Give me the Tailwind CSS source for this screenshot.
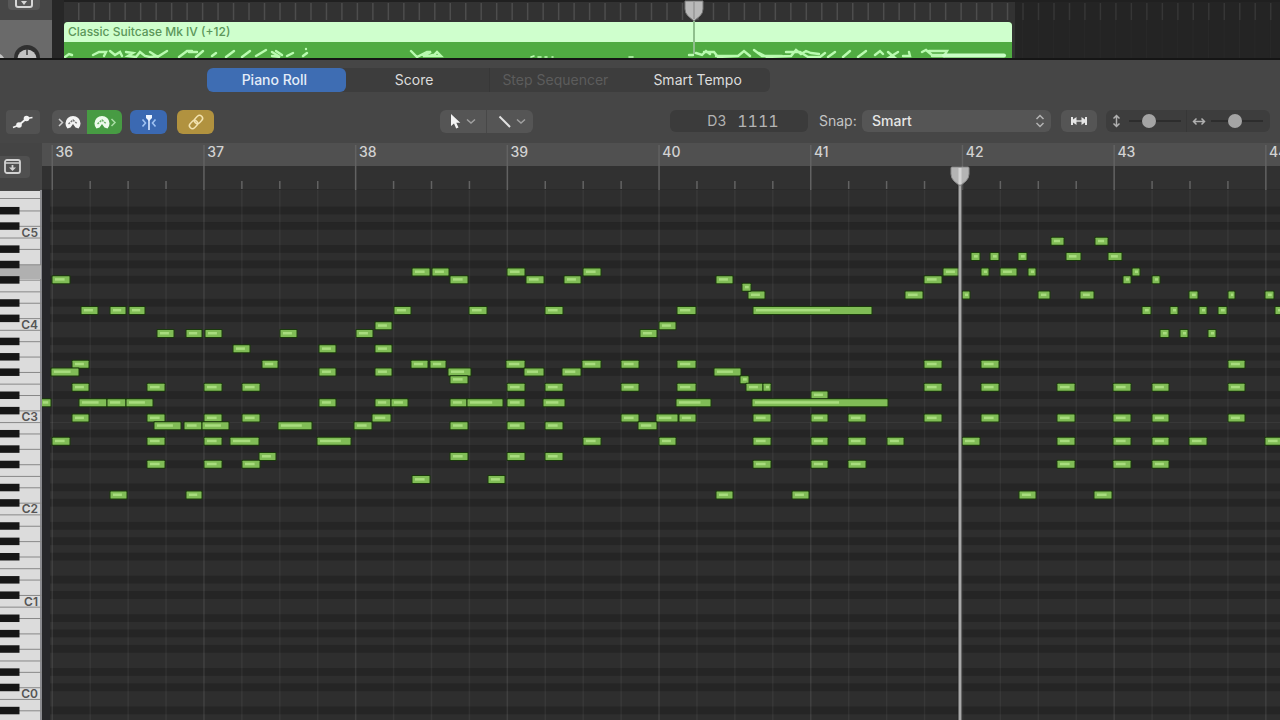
<!DOCTYPE html>
<html lang="en">
<head>
<meta charset="utf-8">
<meta name="viewport" content="width=device-width, initial-scale=1">
<title>Piano Roll</title>
<script src="https://cdn.jsdelivr.net/npm/@tailwindcss/browser@4"></script>
</head>
<body class="flex h-screen flex-col overflow-hidden bg-[#464646] font-['Inter','Liberation_Sans',sans-serif] text-[#dcdcdc]">

<!-- Arrange area -->
<section class="relative flex h-[60px] shrink-0 overflow-hidden border-b-2 border-[#151515] bg-[#2a2a2a]" aria-label="Tracks">
  <div class="flex w-[52px] shrink-0 flex-col">
    <div class="flex h-5 justify-end bg-[#464646] pr-3">
      <button class="flex h-[10px] w-8 justify-center rounded-b bg-[#575757]" aria-label="Track options">
        <svg width="20" height="9" fill="none" stroke="#d6d6d6" stroke-width="2"><path d="M2 0v5q0 2 2 2h12q2 0 2-2V0"/><path d="M7 1h6l-3 4z" fill="#d6d6d6" stroke="none"/></svg>
      </button>
    </div>
    <div class="flex flex-1 items-end bg-[#6a6a6a]">
      <svg width="52" height="20" aria-label="Pan knob"><circle cx="-4" cy="24" r="9" fill="#c4c4c4"/><circle cx="27" cy="20" r="13" fill="#303030"/><circle cx="27" cy="21" r="9.500" fill="#c2c2c2"/><path d="M27 11v6" stroke="#3a3a3a" stroke-width="1.500"/></svg>
    </div>
  </div>
  <div class="w-3 shrink-0 bg-[#272727]"></div>
  <div class="relative flex-1">
    <svg class="block h-full w-full" id="arrange"></svg>
    <article class="absolute left-0 top-[22px] flex h-[38px] w-[948px] flex-col overflow-hidden rounded-t bg-[#50ab42]">
      <h2 class="h-5 bg-[#cfffcd] px-1 text-xs leading-5 font-medium text-[#5b965a]">Classic Suitcase Mk IV (+12)</h2>
      <svg class="h-[16px] w-full" viewBox="0 0 948 16" fill="none" stroke="#b9fbb0" stroke-width="2.400" stroke-linecap="round">
        <path d="M1 15l4-3l3 1M29 13l6-3h7l-2 4M46 9l5 4l5-3l2 4M62 10l7 1l-5 3l8 1l4-5l5 4l5 1l9-1l8-5M86 10l8 5M115 15l8-6h5M125 10h8M132 15l7-6M148 14l4-3M162 15l8-6M178 15l8-6M192 14l10-6M208 10l8 5l-8-1M212 9l6 4M223 14l6-3M239 14l4-3M242 7v0"/>
        <path d="M347 9l6 6l10-5h4l-8 4h10l4-4l4 4h-12l4-1"/>
        <path d="M467 15l3-1M474 15h3M481 15h2M488 15h1M565 15h4" stroke-width="1.600"/>
        <path d="M625 13h4M632 11l6 2l4-4l4 3M640 10l10 0l4 5l20-1l6-5l6 5M652 14h22M690 8l8 6h20M695 11l8 4l24-1l5-6l5 4l5-3l5 2l8 1M722 10l14 0l8 5h12l5-4"/>
        <path d="M764 15l7-5M779 15l7-6M794 15l8-6M811 13l5-4l3 3M824 10l6 5l-4 0l8-5M839 14h7l-1-4M858 10l4-2l6 5h10M865 9h18l-3 5h-12"/>
        <path d="M880 13.500h60" stroke="#c9ffc6" stroke-width="4"/>
      </svg>
    </article>
    <svg class="absolute left-[618px] top-0 h-[58px] w-6"><path d="M12 18v36" stroke="#8fbf8d" stroke-width="2"/><path d="M3 1h18v8q0 4-3 7l-6 5l-6-5q-3-3-3-7z" fill="#b9b9b9" stroke="#777"/><path d="M12 2v17" stroke="#999" stroke-width="1.500"/></svg>
  </div>
</section>

<!-- Editor tabs -->
<nav class="shrink-0 pl-[207px] pt-2">
  <div class="grid h-6 w-[563px] grid-cols-4 rounded-md bg-[#3d3d3d] text-sm" role="tablist">
    <button role="tab" aria-selected="true" class="mr-[2px] rounded-md bg-[#3e6db3] pr-1 font-medium text-[#e4ecf8]">Piano Roll</button>
    <button role="tab" aria-selected="false" class="pr-2">Score</button>
    <button role="tab" aria-selected="false" disabled class="border-l border-[#373737] pr-2 text-[#5c5c5c]">Step Sequencer</button>
    <button role="tab" aria-selected="false" class="pr-1">Smart Tempo</button>
  </div>
</nav>

<!-- Toolbar -->
<div class="flex h-[51px] shrink-0 items-start pl-[6px] pr-[10px] pt-[18px]" role="toolbar">
  <button class="flex h-6 w-[34px] items-center justify-center rounded bg-[#525252]" aria-label="Automation">
    <svg width="24" height="16" fill="#f2f2f2" stroke="#f2f2f2"><circle cx="8" cy="11" r="2.800" stroke="none"/><circle cx="15.500" cy="4.500" r="2.800" stroke="none"/><path d="M2 13.500l6-2.500" stroke-width="1.500"/><path d="M8 11l7.500-6.500" stroke-width="1.800"/><path d="M15.500 4.500l6-1" stroke-width="1.500"/></svg>
  </button>
  <div class="ml-3 flex overflow-hidden rounded-md">
    <button class="flex h-6 w-[35px] items-center justify-center bg-[#555]" aria-label="MIDI in">
      <svg width="26" height="18" fill="none"><path d="M2 6l3.500 3.500l-3.500 3.500" stroke="#ccc" stroke-width="1.500"/><path d="M10.500 15.500A7.500 7.500 0 1 1 21.500 15.500L18.500 14.500L16 11L13.500 14.500Z" fill="#f4f4f4"/><path d="M11.500 11l4.500-4l4.500 4" stroke="#777" stroke-width="1.500" stroke-dasharray="2 1"/></svg>
    </button>
    <button class="flex h-6 w-[35px] items-center justify-center bg-[#479b43]" aria-label="MIDI out">
      <svg width="26" height="18" fill="none"><path d="M19.500 6l3.500 3.500l-3.500 3.500" stroke="#a9dda5" stroke-width="1.500"/><path d="M4.500 15.500A7.500 7.500 0 1 1 15.500 15.500L12.500 14.500L10 11L7.500 14.500Z" fill="#edfaec"/><path d="M5.500 11l4.500-4l4.500 4" stroke="#6bb068" stroke-width="1.500" stroke-dasharray="2 1"/></svg>
    </button>
  </div>
  <button class="ml-2 flex h-6 w-[37px] items-center justify-center rounded-md bg-[#3b69b2]" aria-label="Catch playhead">
    <svg width="20" height="18" fill="none" stroke="#9fc2f2" stroke-width="1.600"><path d="M3.500 6.500l3 3.500l-3 3.500M16.500 6.500l-3 3.500l3 3.500"/><path d="M10 5v12" stroke="#dbe9ff"/><path d="M7 2h6v3l-3 3l-3-3z" fill="#eef5ff" stroke="none"/></svg>
  </button>
  <button class="ml-[10px] flex h-6 w-[37px] items-center justify-center rounded-md bg-[#b1923f]" aria-label="Link">
    <svg width="18" height="18" viewBox="0 0 18 18" fill="none" stroke="#f3e3b0" stroke-width="1.500"><g transform="rotate(-45 9 9)"><rect x="1" y="6" width="9" height="6" rx="3"/><rect x="8" y="6" width="9" height="6" rx="3"/></g></svg>
  </button>
  <div class="ml-[226px] flex overflow-hidden rounded-md">
    <button class="flex h-[23px] w-[47px] items-center justify-center gap-1 border-r border-[#484848] bg-[#555]" aria-label="Pointer tool">
      <svg width="12" height="17"><path d="M1 1v12l3-2.500l2.200 5l2.300-1l-2.200-4.800h4z" fill="#f4f4f4"/></svg>
      <svg width="10" height="7" fill="none" stroke="#a0a0a0" stroke-width="1.500"><path d="M1 1.500l4 3.500l4-3.500"/></svg>
    </button>
    <button class="flex h-[23px] w-[46px] items-center justify-center gap-1 bg-[#555] pl-1" aria-label="Line tool">
      <svg width="14" height="14"><path d="M1.500 1.500l10.500 10.500" stroke="#e2e2e2" stroke-width="2"/></svg>
      <svg width="10" height="7" fill="none" stroke="#a0a0a0" stroke-width="1.500"><path d="M1 1.500l4 3.500l4-3.500"/></svg>
    </button>
  </div>
  <div class="ml-auto flex items-center">
    <output class="flex h-[22px] w-[138px] items-center justify-center gap-[11px] rounded-md bg-[#3b3b3b] pl-2 text-sm text-[#b4b4b4]"><span>D3</span><span class="text-base tabular-nums">1111</span></output>
    <label for="snap" class="ml-[11px] w-[43px] text-sm text-[#c4c4c4]">Snap:</label>
    <div class="relative">
      <select id="snap" class="block h-[22px] w-[189px] appearance-none rounded-md bg-[#555] pl-[10px] text-sm font-medium text-[#e6e6e6]"><option>Smart</option></select>
      <svg class="pointer-events-none absolute right-[6px] top-1" width="10" height="14" fill="none" stroke="#b4b4b4" stroke-width="1.500"><path d="M1.500 5l3.500-3.500l3.500 3.500M1.500 9l3.500 3.500l3.500-3.500"/></svg>
    </div>
    <button class="ml-[10px] flex h-[22px] w-9 items-center justify-center rounded-md bg-[#555]" aria-label="Zoom to fit">
      <svg width="16" height="10" fill="#e4e4e4"><path d="M0 1h2v2.500l3.500-2.500v8l-3.500-2.500v2.500h-2zM16 1h-2v2.500l-3.500-2.500v8l3.500-2.500v2.500h2z"/><path d="M5 4.300h6v1.400h-6z"/></svg>
    </button>
    <div class="ml-[9px] flex h-[22px] w-[164px] items-center rounded-md bg-[#3d3d3d]">
      <svg class="ml-[6px]" width="9" height="14" fill="none" stroke="#b0b0b0" stroke-width="1.500"><path d="M1.500 4.500l3-3l3 3M1.500 9.500l3 3l3-3M4.500 2v10"/></svg>
      <input type="range" aria-label="Vertical zoom" min="0" max="100" value="34" class="ml-2 h-[2px] w-[52px] appearance-none bg-[#2d2d2d] [&::-webkit-slider-thumb]:size-[14px] [&::-webkit-slider-thumb]:appearance-none [&::-webkit-slider-thumb]:rounded-full [&::-webkit-slider-thumb]:bg-[#a4a4a4]">
      <div class="ml-[5px] h-[22px] w-px bg-[#373737]"></div>
      <svg class="ml-[5px]" width="14" height="9" fill="none" stroke="#b0b0b0" stroke-width="1.500"><path d="M4.500 1.500l-3 3l3 3M9.500 1.500l3 3l-3 3M2 4.500h10"/></svg>
      <input type="range" aria-label="Horizontal zoom" min="0" max="100" value="45" class="ml-[5px] h-[2px] w-[52px] appearance-none bg-[#2d2d2d] [&::-webkit-slider-thumb]:size-[14px] [&::-webkit-slider-thumb]:appearance-none [&::-webkit-slider-thumb]:rounded-full [&::-webkit-slider-thumb]:bg-[#a4a4a4]">
    </div>
  </div>
</div>

<!-- Piano roll -->
<main class="flex min-h-0 flex-1">
  <div class="flex w-[42px] shrink-0 flex-col">
    <div class="flex h-[47px] shrink-0 items-center bg-[#444]">
      <button class="flex h-[22px] w-[30px] items-center rounded-r bg-[#505050] pl-1" aria-label="Inspector">
        <svg width="18" height="15" fill="none" stroke="#d2d2d2" stroke-width="1.800"><rect x="1" y="1" width="15" height="13" rx="2"/><path d="M1 4h15" stroke-width="1.500"/><path d="M8.500 6v3.500"/><path d="M5 8.500h7l-3.500 3.500z" fill="#d2d2d2" stroke="none"/></svg>
      </button>
    </div>
    <svg id="keys" class="block min-h-0 w-full flex-1"></svg>
  </div>
  <div class="relative flex min-w-0 flex-1 flex-col">
    <div class="h-[47px] shrink-0 bg-[#313131]"><svg id="ruler" class="block h-full w-full"></svg></div>
    <svg id="roll" class="block min-h-0 w-full flex-1 bg-[#2e2e2e]"></svg>
    <svg class="absolute left-[906px] top-[23px] h-full w-6"><path d="M12 16v900" stroke="#1e1e1e" stroke-opacity=".6" stroke-width="5"/><path d="M12 16v900" stroke="#a9a9a9" stroke-width="3"/><path d="M3 2q0-1 1-1h16q1 0 1 1v6q0 4-3 7l-6 5l-6-5q-3-3-3-7z" fill="#b4b4b4" stroke="#8a8a8a"/><path d="M12 2v16" stroke="#d4d4d4" stroke-width="3"/></svg>
  </div>
</main>

<script>
const NS = 'http://www.w3.org/2000/svg';
function add(parent, tag, attrs, text) {
  const e = document.createElementNS(NS, tag);
  for (const k in attrs) e.setAttribute(k, attrs[k]);
  if (text) e.textContent = text;
  parent.appendChild(e);
  return e;
}
const SEMI = 7.69, MIDDLE = 135.8, BAR = 151.7, BLACK = [1, 3, 6, 8, 10];
const rowY = n => MIDDLE - n * SEMI;
const pc = n => ((n % 12) + 12) % 12;

// Arrange ruler ticks; the part past the region's end is darker
const arrange = document.getElementById('arrange');
add(arrange, 'rect', {x: 0, y: 0, width: 951, height: 60, fill: '#323232'});
add(arrange, 'rect', {x: 951, y: 0, width: 4000, height: 60, fill: '#242424'});
add(arrange, 'rect', {x: 0, y: 0, width: '100%', height: 2, fill: '#202020'});
for (let i = 0; i < 140; i++) {
  const x = 14 + i * 15.48;
  add(arrange, 'rect', {x, y: 3, width: 1.5, height: 17, fill: x < 951 ? '#4d4d4d' : '#363636'});
  if (x > 951) add(arrange, 'rect', {x, y: 20, width: 1, height: 40, fill: '#292929'});
}

// Keyboard
const keys = document.getElementById('keys');
add(keys, 'rect', {x: 0, y: 1, width: 41, height: '100%', fill: '#dcdcdc'});
add(keys, 'rect', {x: 40, y: 0, width: 2, height: '100%', fill: '#8a8a90'});
add(keys, 'rect', {x: 0, y: 75, width: 41, height: 14, fill: '#b0b0b0'});
for (let n = -55; n < 16; n++) {
  const p = pc(n), y = rowY(n);
  if (BLACK.includes(p)) {
    add(keys, 'rect', {x: 19, y: y, width: 23, height: 1, fill: '#888'});
    add(keys, 'rect', {x: 0, y: y - 3.5, width: 19.5, height: 7.5, fill: '#161616'});
  }
  if (p === 0 || p === 5) add(keys, 'rect', {x: 0, y: y + 4, width: 42, height: 1, fill: '#888'});
  if (p === 0 && n >= -48) add(keys, 'text', {x: 38, y: y + 3, 'text-anchor': 'end', 'font-size': 12, 'font-weight': 600, fill: '#555'}, 'C' + (4 + n / 12));
}
add(keys, 'rect', {x: 0, y: 8, width: 42, height: 1, fill: '#888'});

// Ruler
const ruler = document.getElementById('ruler'), roll = document.getElementById('roll');
add(ruler, 'rect', {x: 0, y: 0, width: '100%', height: 23, fill: '#505050'});
add(ruler, 'rect', {x: 0, y: 46, width: '100%', height: 1, fill: '#2a2a2a'});

// Note lanes
for (let n = -80; n < 17; n++) {
  if (BLACK.includes(pc(n))) add(roll, 'rect', {x: 0, y: rowY(n) - 3.8, width: '100%', height: 7.7, fill: '#252525'});
}
add(roll, 'rect', {x: 0, y: rowY(-12.5), width: '100%', height: 1, fill: '#3a3a3a'});
add(roll, 'rect', {x: 0, y: 0, width: 8, height: '100%', fill: '#27272b'});
const BEATS = 36;
for (let b = 0; b < BEATS; b++) {
  const x = 9.5 + b * BAR / 4, bar = b % 4 === 0;
  add(roll, 'rect', {x, y: 0, width: 1.5, height: '100%', fill: '#ffffff', 'fill-opacity': bar ? 0.09 : 0.05});
  add(ruler, 'rect', {x, y: bar ? 2 : 38, width: 1.5, height: bar ? 45 : 8, fill: '#626262'});
  if (bar) add(ruler, 'text', {x: x + 4, y: 14, 'font-size': 14, 'font-weight': 500, fill: '#d2d2d2'}, String(36 + b / 4));
}

// Notes: semitones from C4 -> [start, end] pairs along the time axis
const notes = {
  11: [[1051,1064],[1095,1108]],
  9: [[971,980],[990,999],[1018,1027],[1066,1081],[1108,1122]],
  7: [[412,430],[432,449],[507,525],[583,601],[943,960],[981,989],[1000,1017],[1028,1036],[1132,1140]],
  6: [[52,70],[450,468],[526,544],[564,581],[716,733],[924,942],[1123,1131],[1152,1160]],
  5: [[742,751]],
  4: [[748,765],[905,923],[962,970],[1038,1050],[1080,1094],[1189,1198],[1228,1235],[1265,1274]],
  2: [[81,98],[110,126],[129,145],[394,411],[469,487],[545,563],[677,696],[753,872,830],[1142,1151],[1170,1178],[1199,1207],[1218,1227],[1275,1283]],
  0: [[375,392],[659,676]],
  '-1': [[157,174],[186,202],[205,222],[280,297],[356,373],[640,657],[1160,1169],[1180,1188],[1208,1216]],
  '-3': [[233,250],[319,336],[375,392]],
  '-5': [[72,89],[262,278],[411,428],[430,446],[506,525],[582,601],[621,639],[677,696],[924,942],[981,999],[1228,1245]],
  '-6': [[51,79],[319,336],[375,392],[448,471],[524,544],[562,581],[714,741]],
  '-7': [[450,468],[740,749]],
  '-8': [[72,89],[147,165],[204,222],[242,260],[507,525],[545,563],[621,639],[677,696],[746,763],[763,771],[924,942],[981,999],[1057,1075],[1113,1131],[1152,1169],[1228,1245]],
  '-9': [[811,828]],
  '-10': [[40,51],[79,107],[107,126],[126,153],[319,336],[375,391],[391,408],[450,467],[467,503],[507,525],[543,565],[676,711],[752,888,839]],
  '-12': [[72,89],[147,165],[204,222],[242,260],[372,391],[621,639],[656,678],[679,696],[753,771],[811,828],[848,866],[924,942],[981,999],[1057,1075],[1113,1131],[1152,1169],[1228,1245]],
  '-13': [[154,181],[184,202],[202,229],[278,312],[354,372],[450,468],[507,525],[545,563],[638,657]],
  '-15': [[52,70],[147,165],[204,222],[230,259],[317,351],[583,601],[659,676],[753,771],[811,828],[848,866],[887,904],[962,980],[1057,1075],[1113,1131],[1152,1169],[1189,1207],[1265,1283]],
  '-17': [[259,276],[450,468],[507,525],[545,563]],
  '-18': [[147,165],[204,222],[242,260],[753,771],[811,828],[848,866],[1057,1075],[1113,1131],[1152,1169]],
  '-20': [[412,430],[488,505]],
  '-22': [[110,127],[186,202],[716,733],[792,809],[1019,1036],[1094,1112]]
};
for (const n in notes) {
  const y = rowY(Number(n));
  for (const [a, b, v] of notes[n]) {
    const x = a - 42, w = b - a;
    add(roll, 'rect', {x: x - 0.5, y: y - 4.5, width: w + 1, height: 9, rx: 1, fill: '#1a3a0b'});
    add(roll, 'rect', {x: x + 0.5, y: y - 3.5, width: w - 1, height: 7, rx: 0.5, fill: '#80bc56'});
    const end = v ? v - 42 : x + w * (w < 12 ? 0.75 : 0.7);
    add(roll, 'rect', {x: x + 3, y: y - 1.5, width: Math.max(2, end - x - 3), height: 2.5, fill: '#a8dd7e'});
  }
}
</script>
</body>
</html>
